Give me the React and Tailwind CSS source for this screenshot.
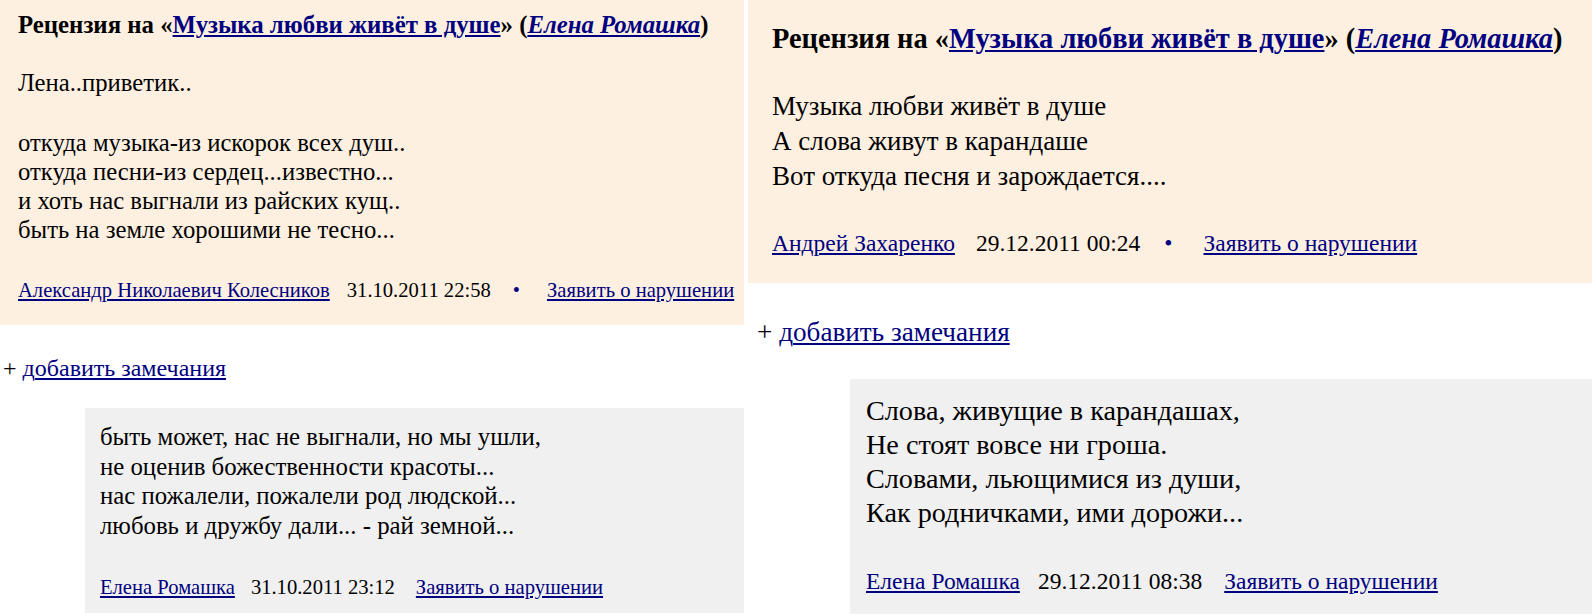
import React from "react";

const serif = { fontFamily: '"Liberation Serif", "Times New Roman", serif' };

function Dot({ cls }) {
  return <span className={cls}>•</span>;
}

export default function App() {
  return (
    <div
      className="w-[1592px] h-[616px] overflow-hidden bg-white text-black flex"
      style={serif}
    >
      {/* LEFT COLUMN */}
      <div className="w-[744px] shrink-0 flex flex-col">
        <div className="h-[325px] bg-[#fdf0e1] pl-[18px] pt-[11px]">
          <div className="font-bold text-[24.8px] leading-[28px] whitespace-nowrap">
            Рецензия на «
            <a className="text-[#000080] underline">Музыка любви живёт в душе</a>
            » (
            <a className="text-[#000080] underline italic">Елена Ромашка</a>)
          </div>
          <div className="mt-[29px] text-[24.7px] leading-[29.5px]">Лена..приветик..</div>
          <div className="mt-[30px] text-[24.7px] leading-[29px]">
            <div>откуда музыка-из искорок всех душ..</div>
            <div>откуда песни-из сердец...известно...</div>
            <div>и хоть нас выгнали из райских кущ..</div>
            <div>быть на земле хорошими не тесно...</div>
          </div>
          <div className="mt-[34px] flex items-center text-[20.6px] leading-[24px] whitespace-nowrap">
            <a className="text-[#000080] underline">Александр Николаевич Колесников</a>
            <span className="ml-[17px]">31.10.2011 22:58</span>
            <Dot cls="ml-[22px] text-[#000080]" />
            <a className="ml-[27px] text-[#000080] underline">Заявить о нарушении</a>
          </div>
        </div>
        <div className="mt-[31px] pl-[3px] text-[24px] leading-[24px] whitespace-nowrap">
          <span>+ </span>
          <span className="text-[#000080]">д</span>
          <a className="text-[#000080] underline">обавить замечания</a>
        </div>
        <div className="mt-[28px] ml-[85px] flex-1 mb-[3px] bg-[#f0f0f0] pl-[15px] pt-[14px]">
          <div className="text-[24.8px] leading-[29.7px]">
            <div>быть может, нас не выгнали, но мы ушли,</div>
            <div>не оценив божественности красоты...</div>
            <div>нас пожалели, пожалели род людской...</div>
            <div>любовь и дружбу дали... - рай земной...</div>
          </div>
          <div className="mt-[34px] flex items-center text-[20.6px] leading-[24px] whitespace-nowrap">
            <a className="text-[#000080] underline">Елена Ромашка</a>
            <span className="ml-[16px]">31.10.2011 23:12</span>
            <a className="ml-[21px] text-[#000080] underline">Заявить о нарушении</a>
          </div>
        </div>
      </div>

      {/* GAP */}
      <div className="w-[4px] shrink-0" />

      {/* RIGHT COLUMN */}
      <div className="flex-1 flex flex-col">
        <div className="h-[283px] bg-[#fdf0e1] pl-[24px] pt-[23px]">
          <div className="font-bold text-[28.4px] leading-[32px] whitespace-nowrap">
            Рецензия на «
            <a className="text-[#000080] underline">Музыка любви живёт в душе</a>
            » (
            <a className="text-[#000080] underline italic">Елена Ромашка</a>)
          </div>
          <div className="mt-[34px] text-[27px] leading-[35px]">
            <div>Музыка любви живёт в душе</div>
            <div>А слова живут в карандаше</div>
            <div>Вот откуда песня и зарождается....</div>
          </div>
          <div className="mt-[35px] flex items-center text-[23.5px] leading-[28px] whitespace-nowrap">
            <a className="text-[#000080] underline">Андрей Захаренко</a>
            <span className="ml-[21px]">29.12.2011 00:24</span>
            <Dot cls="ml-[24px] text-[#000080]" />
            <a className="ml-[31px] text-[#000080] underline">Заявить о нарушении</a>
          </div>
        </div>
        <div className="mt-[35px] pl-[9px] text-[27.2px] leading-[28px] whitespace-nowrap">
          <span>+ </span>
          <span className="text-[#000080]">д</span>
          <a className="text-[#000080] underline">обавить замечания</a>
        </div>
        <div className="mt-[33px] ml-[102px] flex-1 mb-[2px] bg-[#f0f0f0] pl-[16px] pt-[15px]">
          <div className="text-[28.2px] leading-[34px]">
            <div>Слова, живущие в карандашах,</div>
            <div>Не стоят вовсе ни гроша.</div>
            <div>Словами, льющимися из души,</div>
            <div>Как родничками, ими дорожи...</div>
          </div>
          <div className="mt-[37px] flex items-center text-[23.5px] leading-[28px] whitespace-nowrap">
            <a className="text-[#000080] underline">Елена Ромашка</a>
            <span className="ml-[18px]">29.12.2011 08:38</span>
            <a className="ml-[22px] text-[#000080] underline">Заявить о нарушении</a>
          </div>
        </div>
      </div>
    </div>
  );
}
